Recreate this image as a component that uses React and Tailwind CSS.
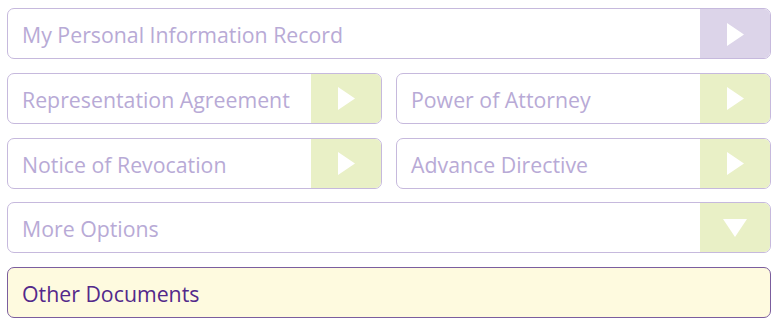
import React from 'react';

const font = { fontFamily: '"Open Sans", "Liberation Sans", sans-serif' };

function Arrow({ down }) {
  if (down) {
    return (
      <svg width="24" height="18" viewBox="0 0 24 18">
        <polygon points="0,0 24,0 12,18" fill="#fff" />
      </svg>
    );
  }
  return (
    <svg width="17" height="23" viewBox="0 0 17 23">
      <polygon points="0,0 17,11.5 0,23" fill="#fff" />
    </svg>
  );
}

function Row({ label, tone = 'green', down = false }) {
  const btn = tone === 'purple' ? 'bg-[#dcd4e9]' : 'bg-[#e9f0c6]';
  return (
    <div className="flex h-[51px] flex-1 items-stretch overflow-hidden rounded-[7px] border border-[#c6b9dd] bg-white">
      <div className="flex flex-1 items-center pl-[14px] pt-[3px] text-[21.3px] text-[#b8aad6]">{label}</div>
      <div className={`flex w-[70px] items-center justify-center pt-[1px] ${btn}`}>
        <Arrow down={down} />
      </div>
    </div>
  );
}

export default function App() {
  return (
    <div className="flex h-[330px] w-[780px] flex-col gap-[13.75px] bg-white pl-[7px] pr-[9px] pt-[8px]" style={font}>
      <div className="flex">
        <Row label="My Personal Information Record" tone="purple" />
      </div>
      <div className="flex gap-[14px]">
        <Row label="Representation Agreement" />
        <Row label="Power of Attorney" />
      </div>
      <div className="flex gap-[14px]">
        <Row label="Notice of Revocation" />
        <Row label="Advance Directive" />
      </div>
      <div className="flex">
        <Row label="More Options" down />
      </div>
      <div className="flex h-[51px] items-center rounded-[7px] border border-[#7b5d9e] bg-[#fefadf] pl-[14px] pt-[3px] text-[21.3px] text-[#53298b]">
        Other Documents
      </div>
    </div>
  );
}
